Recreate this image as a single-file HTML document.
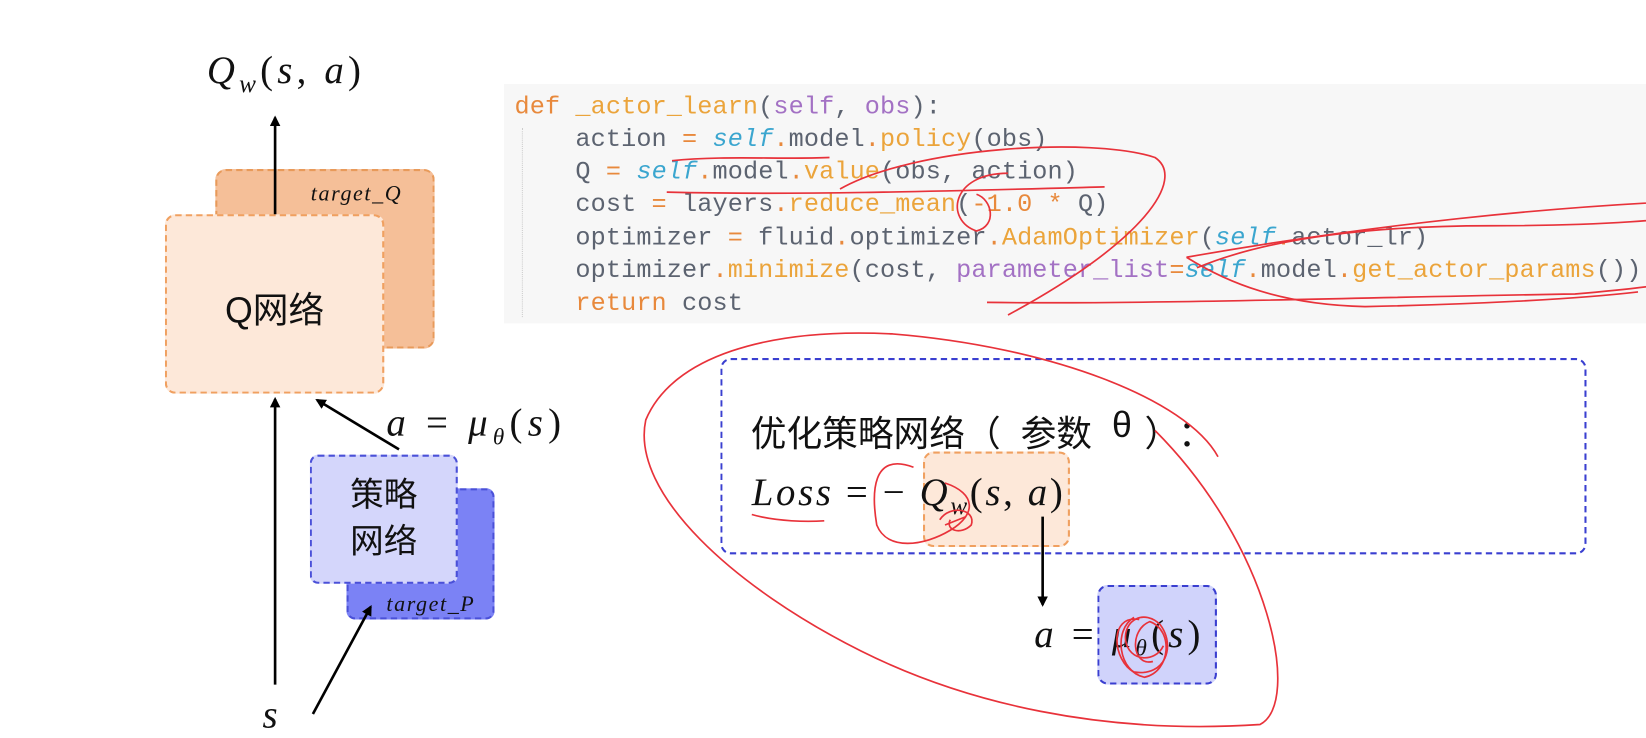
<!DOCTYPE html>
<html><head><meta charset="utf-8"><style>
html,body{margin:0;padding:0;background:#fff;overflow:hidden;width:1646px;height:733px}
#w{position:absolute;left:0;top:0;width:1568px;height:698px;transform:scale(1.05);transform-origin:0 0}
.a{position:absolute}
.code{position:absolute;left:480px;top:80px;width:1100px;height:228px;background:#f7f7f7}
.ln{position:absolute;left:490px;font-family:"Liberation Mono",monospace;font-size:24px;letter-spacing:0.1px;color:#5c6370;white-space:pre;line-height:30px}
.k{color:#e8893c}.p{color:#a371c4}.c{color:#3ba6cf;font-style:italic}.f{color:#eba43b}
.m{font-family:"Liberation Serif",serif;font-style:italic;color:#111;white-space:pre}
.cj{font-family:"Liberation Sans","Noto Sans CJK SC",sans-serif;color:#111;white-space:pre}
.box{position:absolute;border-radius:10px;box-sizing:border-box}
</style></head><body><div id="w">
<div class="code"></div>
<div class="a" style="left:497px;top:122px;height:180px;border-left:1px dotted #ccc"></div>
<div class="ln" style="top:88px"><span class="k">def</span> <span class="f">_actor_learn</span>(<span class="p">self</span>, <span class="p">obs</span>):</div>
<div class="ln" style="top:119px">    action <span class="k">=</span> <span class="c">self</span><span class="k">.</span>model<span class="k">.</span><span class="f">policy</span>(obs)</div>
<div class="ln" style="top:150px">    Q <span class="k">=</span> <span class="c">self</span><span class="k">.</span>model<span class="k">.</span><span class="f">value</span>(obs, action)</div>
<div class="ln" style="top:181px">    cost <span class="k">=</span> layers<span class="k">.</span><span class="f">reduce_mean</span>(<span class="k">-1.0</span> <span class="k">*</span> Q)</div>
<div class="ln" style="top:213px">    optimizer <span class="k">=</span> fluid<span class="k">.</span>optimizer<span class="k">.</span><span class="f">AdamOptimizer</span>(<span class="c">self</span><span class="k">.</span>actor_lr)</div>
<div class="ln" style="top:244px">    optimizer<span class="k">.</span><span class="f">minimize</span>(cost, <span class="p">parameter_list</span><span class="k">=</span><span class="c">self</span><span class="k">.</span>model<span class="k">.</span><span class="f">get_actor_params</span>())</div>
<div class="ln" style="top:275px">    <span class="k">return</span> cost</div>

<!-- left diagram -->
<div class="box" style="left:205px;top:161px;width:209px;height:171px;background:#f5bf98;border:2px dashed #e89a5a"></div>
<div class="a m" style="left:296px;top:172px;font-size:21px;letter-spacing:1.5px">target_Q</div>
<div class="box" style="left:157px;top:204px;width:209px;height:171px;background:#fde8d9;border:2px dashed #f0a060"></div>
<div class="a cj" style="left:157px;top:268px;width:209px;text-align:center;font-size:34px">Q网络</div>
<div class="a m" style="left:197px;top:46px;font-size:37px;font-style:normal;letter-spacing:4px"><i>Q<sub style="font-size:24px">w</sub></i>(<i>s</i>, <i>a</i>)</div>
<div class="box" style="left:330px;top:465px;width:141px;height:125px;background:#7b82f5;border:2px dashed #4a50d8;border-radius:8px"></div>
<div class="a m" style="left:368px;top:563px;font-size:21px;letter-spacing:1.5px;width:102px;overflow:hidden">target_P</div>
<div class="box" style="left:295px;top:433px;width:141px;height:123px;background:#d4d6fb;border:2px dashed #4a50d8;border-radius:8px"></div>
<div class="a cj" style="left:295px;top:449px;width:141px;text-align:center;font-size:32px;line-height:44px">策略<br>网络</div>
<div class="a m" style="left:368px;top:382px;font-size:37px;font-style:normal;letter-spacing:5px"><i>a</i> = <i>μ<sub style="font-size:22px">θ</sub></i>(<i>s</i>)</div>
<div class="a m" style="left:250px;top:660px;font-size:37px">s</div>

<!-- right panel -->
<div class="box" style="left:686px;top:341px;width:825px;height:187px;border:2px dashed #3a3fd0"></div>
<div class="a cj" style="left:715px;top:386px;font-size:34px">优化策略网络（</div>
<div class="a cj" style="left:972px;top:386px;font-size:34px">参数</div>
<div class="a cj" style="left:1059px;top:386px;font-size:34px">θ</div>
<div class="a cj" style="left:1090px;top:386px;font-size:34px">）</div>
<div class="a cj" style="left:1122px;top:386px;font-size:34px">：</div>
<div class="box" style="left:879px;top:430px;width:140px;height:91px;background:#fde8d9;border:2px dashed #f0a060"></div>
<div class="a m" style="left:716px;top:448px;font-size:37px;font-style:normal;letter-spacing:2.5px"><i>Loss</i> = − <i>Q<sub style="font-size:24px">w</sub></i>(<i>s</i>, <i>a</i>)</div>
<div class="box" style="left:1045px;top:557px;width:114px;height:95px;background:#d0d3fb;border:2px dashed #3a3fd0"></div>
<div class="a m" style="left:985px;top:583px;font-size:37px;font-style:normal;letter-spacing:4px"><i>a</i> = <i>μ<sub style="font-size:22px">θ</sub></i>(<i>s</i>)</div>

<svg class="a" style="left:0;top:0" width="1568" height="698" viewBox="0 0 1568 698">
<defs><marker id="ar" markerWidth="10" markerHeight="10" refX="8" refY="5" orient="auto" markerUnits="userSpaceOnUse"><path d="M0,0 L10,5 L0,10 Z" fill="#000"/></marker></defs>
<g stroke="#000" stroke-width="2.5" fill="none">
<line x1="262" y1="204" x2="262" y2="112" marker-end="url(#ar)"/>
<line x1="262" y1="652" x2="262" y2="380" marker-end="url(#ar)"/>
<line x1="380" y1="428" x2="302" y2="381" marker-end="url(#ar)"/>
<line x1="298" y1="680" x2="353" y2="578" marker-end="url(#ar)"/>
<line x1="993" y1="492" x2="993" y2="576" marker-end="url(#ar)"/>
</g>
<g stroke="#e8323a" stroke-width="1.6" fill="none">
<path d="M640,153 C690,148 740,152 790,150"/>
<path d="M635,183 C760,186 900,182 1052,178"/>
<path d="M800,180 C870,140 1040,130 1100,150 C1130,170 1090,230 960,300"/>
<path d="M960,165 C905,165 900,210 930,220 C950,215 945,190 930,185"/>
<path d="M1130,245 C1300,215 1480,195 1646,190"/>
<path d="M1140,255 C1200,230 1290,215 1420,215 C1520,215 1600,210 1640,200"/>
<path d="M940,288 C1100,290 1300,283 1500,280 C1560,275 1600,270 1640,260"/>
<path d="M1130,245 C1170,270 1220,290 1300,292 C1400,290 1500,285 1560,278"/>
<path d="M1160,435 C1130,380 1000,330 850,318 C730,312 640,340 615,400 C600,470 700,560 820,620 C920,670 1050,700 1200,690 C1240,670 1210,520 1100,410"/>
<path d="M716,490 C740,497 770,497 785,496"/>
<path d="M870,445 C830,430 830,470 835,500 C845,525 880,520 905,505 C930,490 930,470 900,460"/>
<path d="M895,495 C905,480 930,485 925,500 C915,510 900,505 905,495 M900,500 L920,492"/>
<path d="M1085,590 C1055,585 1060,630 1080,640 C1110,645 1120,615 1105,595 C1090,580 1070,590 1072,610 C1075,630 1100,632 1108,615"/>
<path d="M1080,588 C1060,600 1065,640 1090,645 C1115,640 1118,600 1095,592 C1075,600 1078,635 1098,630"/>
</g>
</svg>
</div></body></html>
